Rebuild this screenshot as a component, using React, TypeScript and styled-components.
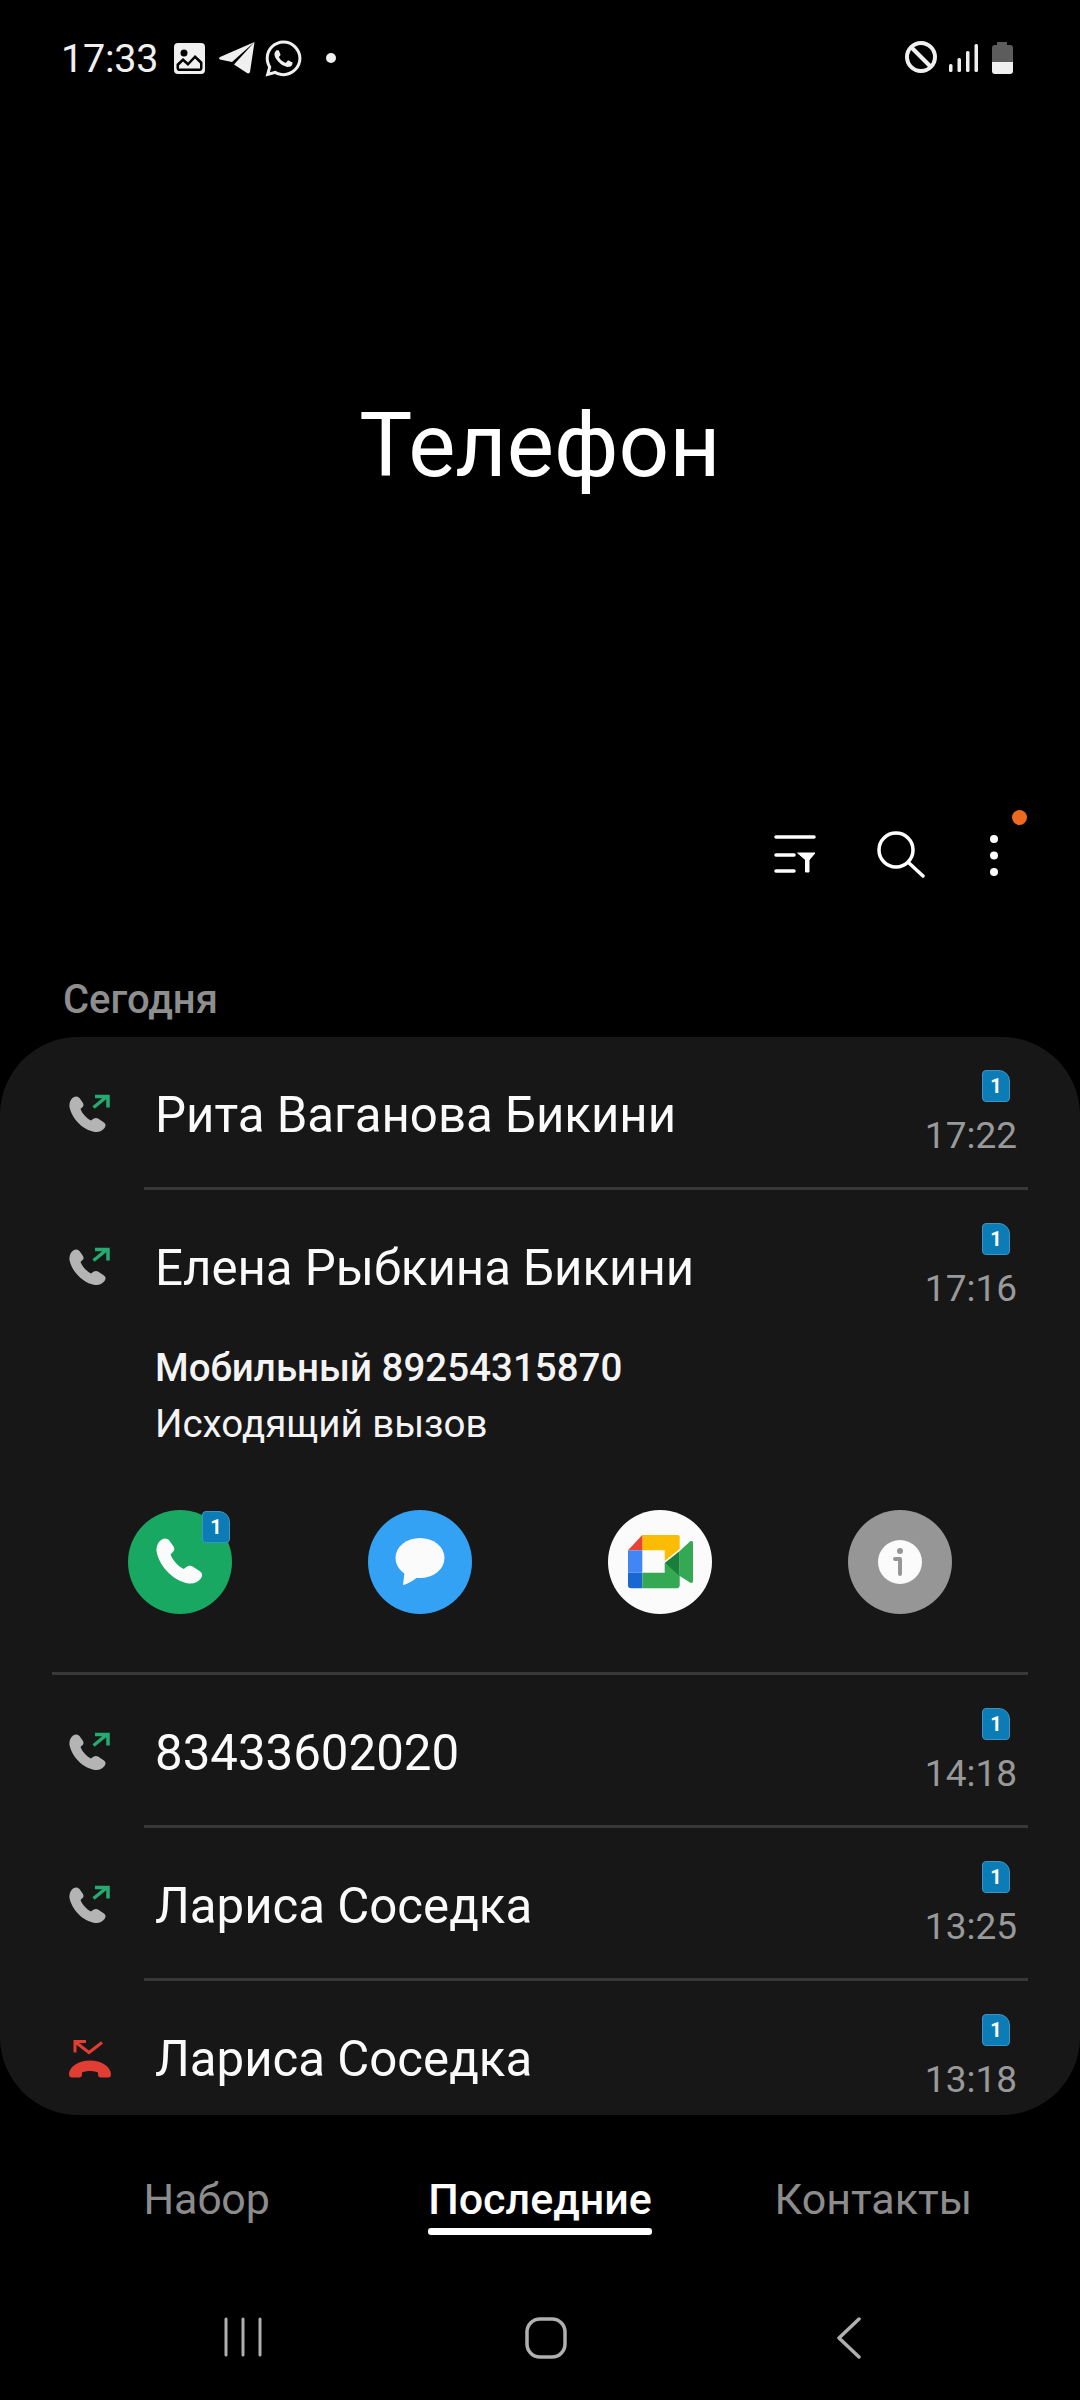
import styled, { createGlobalStyle } from "styled-components";
import { FaWhatsapp } from "react-icons/fa";

type CallKind = "outgoing" | "rejected";

interface Call {
  name: string;
  time: string;
  kind: CallKind;
}

const GlobalStyle = createGlobalStyle`
  html, body {
    margin: 0;
    padding: 0;
    background: #000;
  }
  * {
    box-sizing: border-box;
  }
`;

const Page = styled.div`
  width: 1080px;
  height: 2400px;
  background: #000;
  color: #fff;
  font-family: Roboto, "Noto Sans", sans-serif;
  display: flex;
  flex-direction: column;
  overflow: hidden;
`;

const StatusBar = styled.div`
  height: 116px;
  padding: 0 64px 0 61px;
  display: flex;
  align-items: center;
  justify-content: space-between;
  color: #f0f0f0;
`;

const StatusGroup = styled.div`
  display: flex;
  align-items: center;
`;

const Clock = styled.div`
  font-size: 39.5px;
  width: 113px;
  letter-spacing: -0.2px;
`;

const AppIcons = styled(StatusGroup)`
  gap: 14px;
`;

const WhatsappIcon = styled(FaWhatsapp)`
  margin-left: -6px;
`;

const StatusDot = styled.span`
  width: 10px;
  height: 10px;
  margin-left: 22px;
  border-radius: 50%;
  background: #f0f0f0;
`;

const TitleArea = styled.div`
  height: 658px;
  display: flex;
  align-items: center;
  justify-content: center;
`;

const Title = styled.h1`
  margin: 0;
  font-size: 89px;
  font-weight: 400;
`;

const Toolbar = styled.div`
  height: 162px;
  padding-right: 49px;
  display: flex;
  align-items: center;
  justify-content: flex-end;
`;

const ToolButton = styled.div<{ $width: number }>`
  position: relative;
  width: ${({ $width }) => $width}px;
  display: flex;
  justify-content: center;
  align-items: center;
`;

const NoticeDot = styled.span`
  position: absolute;
  top: -21px;
  left: 55px;
  width: 15px;
  height: 15px;
  border-radius: 50%;
  background: #ee6a1f;
`;

const SectionLabel = styled.div`
  height: 101px;
  padding: 39px 0 0 63px;
  font-size: 40px;
  line-height: 50px;
  font-weight: 500;
  color: #8e8e8e;
`;

const Card = styled.div`
  height: 1078px;
  background: #171717;
  border-radius: 78px;
  overflow: hidden;
`;

const Row = styled.div`
  height: 150px;
  padding-left: 69px;
  display: flex;
  align-items: center;
`;

const IconSlot = styled.div`
  width: 86px;
  height: 44px;
  margin-top: 3px;
  flex-shrink: 0;
`;

const Name = styled.div`
  flex: 1;
  font-size: 49.2px;
  margin-top: 5px;
  color: #fafafa;
`;

const RowMeta = styled.div`
  align-self: flex-start;
  padding: 33px 63px 0 0;
  display: flex;
  flex-direction: column;
  align-items: flex-end;
`;

const SimBadge = styled.div`
  width: 28px;
  height: 32px;
  border: 1px solid #3d94c4;
  border-radius: 4px 11px 4px 4px;
  background: #0b7cb6;
  color: #fff;
  font-size: 20px;
  line-height: 30px;
  font-weight: 700;
  text-align: center;
`;

const RowSim = styled(SimBadge)`
  margin-right: 7px;
`;

const Time = styled.div`
  margin-top: 11px;
  font-size: 37px;
  line-height: 46px;
  color: #999;
`;

const Divider = styled.div<{ $full?: boolean }>`
  height: 3px;
  margin: 0 52px 0 ${({ $full }) => ($full ? 52 : 144)}px;
  background: #383838;
`;

const Details = styled.div`
  padding-left: 155px;
  display: flex;
  flex-direction: column;
`;

const DetailLine = styled.div<{ $strong?: boolean }>`
  font-size: 38.5px;
  height: ${({ $strong }) => ($strong ? 55 : 54)}px;
  line-height: 52px;
  padding-top: ${({ $strong }) => ($strong ? 2 : 3)}px;
  font-weight: ${({ $strong }) => ($strong ? 500 : 400)};
  color: #f4f4f4;
`;

const Actions = styled.div`
  margin-top: 61px;
  padding: 0 0 58px 60px;
  display: grid;
  grid-template-columns: repeat(4, 240px);
  justify-items: center;
`;

const ActionCircle = styled.div<{ $bg: string }>`
  position: relative;
  width: 104px;
  height: 104px;
  border-radius: 50%;
  background: ${({ $bg }) => $bg};
  display: flex;
  align-items: center;
  justify-content: center;
`;

const ActionSim = styled(SimBadge)`
  position: absolute;
  top: 1px;
  right: 2px;
`;

const Tabs = styled.div`
  height: 126px;
  padding: 0 40px;
  display: grid;
  grid-template-columns: repeat(3, 1fr);
  justify-items: center;
  align-items: start;
`;

const Tab = styled.div<{ $active?: boolean }>`
  padding-top: 56px;
  font-size: 43px;
  line-height: 56px;
  font-weight: ${({ $active }) => ($active ? 500 : 400)};
  color: ${({ $active }) => ($active ? "#fff" : "#8c8c8c")};

  &::after {
    content: "";
    display: ${({ $active }) => ($active ? "block" : "none")};
    height: 7px;
    margin-top: 1px;
    border-radius: 3px;
    background: #fff;
  }
`;

const NavBar = styled.div`
  flex: 1;
  padding: 76px 0 0 91px;
  display: grid;
  grid-template-columns: repeat(3, 303px);
  justify-items: center;
  align-items: start;
`;

const Handset = () => (
  <path d="M5 1C7 0 9 .5 10.500 2L14 7C15 9 14.500 10.500 13 11.500L11.500 13C13 17 17 22 22 24.500L24 23C25.500 22 27.500 21.500 29 22.500L35 26.500C37 28 37 30 35.500 32C33 35 30 36.500 26 36C14 34 3 23 .5 11C0 7 1.500 3 5 1Z" />
);

const OutgoingIcon = () => (
  <svg width="42" height="44" viewBox="0 0 42 44">
    <g fill="#b4b4b4" transform="translate(0 4)">
      <Handset />
    </g>
    <path
      d="M24.500 15.500L38 4.500M26 4.500H39V15.500"
      fill="none"
      stroke="#25ab70"
      strokeWidth="3.500"
    />
  </svg>
);

const RejectedIcon = () => (
  <svg width="42" height="44" viewBox="0 0 42 44">
    <path
      d="M7 6.500L20 16.500L33 6.500M6 16.500V5.500H17"
      fill="none"
      stroke="#e23d33"
      strokeWidth="3"
    />
    <path
      fill="#e23d33"
      transform="translate(0 1.500)"
      d="M0 37C0 29 10 23 21 23C32 23 42 29 42 37C42 39 41 40 39 40H32C30 40 29 39 29 37V35C24 33 18 33 13 35V37C13 39 12 40 10 40H3C1 40 0 39 0 37Z"
    />
  </svg>
);

const GalleryIcon = () => (
  <svg width="31" height="31" viewBox="0 0 31 31">
    <rect width="31" height="31" rx="4" fill="#f0f0f0" />
    <circle cx="10" cy="10" r="3.500" fill="#000" />
    <path
      d="M2.500 25V21L9 15L14 19.500L21 12L28.500 19V25C28.500 26.500 27.500 28 26 28H5C3.500 28 2.500 26.500 2.500 25Z"
      fill="#000"
    />
    <path d="M5 25.500V22.500L9 18.500L14 23L21 15.500L26 20.500V25.500Z" fill="#f0f0f0" />
  </svg>
);

const TelegramIcon = () => (
  <svg width="36" height="32" viewBox="0 0 36 32" fill="#f0f0f0">
    <path d="M35.500 0L1 15C-.5 16 0 17 1 17.500L13 20Z" />
    <path d="M35.500 0L15 22.500L28 31C29.500 32 30.500 31 31 30Z" />
  </svg>
);

const StatusRight = () => (
  <svg width="111" height="34" viewBox="0 0 111 34">
    <circle cx="16" cy="16" r="14" fill="none" stroke="#f0f0f0" strokeWidth="4" />
    <path d="M6 6L26 26" stroke="#f0f0f0" strokeWidth="4" />
    <g fill="#f0f0f0">
      <rect x="44" y="23" width="3.500" height="8" rx="1.500" />
      <rect x="52.500" y="17" width="3.500" height="14" rx="1.500" />
      <rect x="61" y="10" width="3.500" height="21" rx="1.500" />
      <rect x="69.500" y="3" width="3.500" height="28" rx="1.500" />
    </g>
    <path
      d="M92 1H102V4H105C107 4 108 5 108 7V21H87V7C87 5 88 4 90 4H92Z"
      fill="#5c5c5c"
    />
    <path d="M87 21H108V30C108 32 107 33 105 33H90C88 33 87 32 87 30Z" fill="#f0f0f0" />
  </svg>
);

const FilterIcon = () => (
  <svg width="42" height="40" viewBox="0 0 42 40" fill="none" stroke="#fff" strokeWidth="3.500" strokeLinecap="round">
    <path d="M2 2H40M2 20H20M2 36H20" />
    <path d="M24 18H41L35 25V37H31.500V25Z" fill="#fff" strokeWidth="1" strokeLinejoin="round" />
  </svg>
);

const SearchIcon = () => (
  <svg width="48" height="48" viewBox="0 0 48 48" fill="none" stroke="#fff" strokeWidth="3.500" strokeLinecap="round">
    <circle cx="19" cy="19" r="17" />
    <path d="M32 32L46 45" />
  </svg>
);

const MoreIcon = () => (
  <svg width="16" height="48" viewBox="0 0 16 48" fill="#fff">
    <circle cx="8" cy="8" r="4" />
    <circle cx="8" cy="24.500" r="4" />
    <circle cx="8" cy="41" r="4" />
  </svg>
);

const MessageIcon = () => (
  <svg width="50" height="48" viewBox="0 0 50 48">
    <ellipse cx="25" cy="20" rx="24.500" ry="20" fill="#fbfbfb" />
    <path d="M10 30L8 47C14 46 20 41 24 38Z" fill="#fbfbfb" />
  </svg>
);

const MeetIcon = () => (
  <svg width="65" height="54" viewBox="0 0 65 54">
    <path d="M14.300 0H50C51 0 51.700 1 51.700 2V14L36.700 26V15.300H14.300Z" fill="#fbbc04" />
    <path d="M0 15.300L14.300 0V15.300Z" fill="#ea4335" />
    <rect y="15.300" width="14.300" height="22.400" fill="#4285f4" />
    <path d="M0 37.700H14.300V53.300H3C1 53.300 0 52 0 50.500Z" fill="#1967d2" />
    <path d="M14.300 37.700H36.700V28L51.700 40V50.500C51.700 52 50.500 53.300 49 53.300H14.300Z" fill="#34a853" />
    <path d="M36.700 28L51.700 16V41Z" fill="#188038" />
    <path d="M51.700 16L62 6.500C63.500 5.500 65 6 65 8V46C65 48 63.500 48.500 62 47.500L51.700 41Z" fill="#34a853" />
  </svg>
);

const InfoIcon = () => (
  <svg width="44" height="44" viewBox="0 0 44 44">
    <circle cx="22" cy="22" r="22" fill="#fbfbfb" />
    <circle cx="22" cy="11" r="3" fill="#969696" />
    <path d="M17 19H22V34" fill="none" stroke="#969696" strokeWidth="4" strokeLinecap="round" strokeLinejoin="round" />
  </svg>
);

const NavRecents = () => (
  <svg width="38" height="40" viewBox="0 0 38 40" stroke="#b0b0b0" strokeWidth="3" strokeLinecap="round">
    <path d="M2 2V38M19 2V38M36 2V38" />
  </svg>
);

const NavHome = () => (
  <svg width="42" height="42" viewBox="0 0 42 42">
    <rect x="2" y="2" width="38" height="38" rx="13" fill="none" stroke="#b0b0b0" strokeWidth="3.500" />
  </svg>
);

const NavBack = () => (
  <svg width="26" height="42" viewBox="0 0 26 42">
    <path d="M23 2L3 21L23 40" fill="none" stroke="#b0b0b0" strokeWidth="3.500" strokeLinecap="round" strokeLinejoin="round" />
  </svg>
);

const CallRow = ({ call }: { call: Call }) => (
  <Row>
    <IconSlot>{call.kind === "outgoing" ? <OutgoingIcon /> : <RejectedIcon />}</IconSlot>
    <Name>{call.name}</Name>
    <RowMeta>
      <RowSim>1</RowSim>
      <Time>{call.time}</Time>
    </RowMeta>
  </Row>
);

const laterCalls: Call[] = [
  { name: "83433602020", time: "14:18", kind: "outgoing" },
  { name: "Лариса Соседка", time: "13:25", kind: "outgoing" },
  { name: "Лариса Соседка", time: "13:18", kind: "rejected" },
];

const App = () => (
  <Page>
    <GlobalStyle />
    <StatusBar>
      <StatusGroup>
        <Clock>17:33</Clock>
        <AppIcons>
          <GalleryIcon />
          <TelegramIcon />
          <WhatsappIcon size={41} />
        </AppIcons>
        <StatusDot />
      </StatusGroup>
      <StatusRight />
    </StatusBar>

    <TitleArea>
      <Title>Телефон</Title>
    </TitleArea>

    <Toolbar>
      <ToolButton $width={100}>
        <FilterIcon />
      </ToolButton>
      <ToolButton $width={112}>
        <SearchIcon />
      </ToolButton>
      <ToolButton $width={74}>
        <MoreIcon />
        <NoticeDot />
      </ToolButton>
    </Toolbar>

    <SectionLabel>Сегодня</SectionLabel>

    <Card>
      <CallRow call={{ name: "Рита Ваганова Бикини", time: "17:22", kind: "outgoing" }} />
      <Divider />
      <CallRow call={{ name: "Елена Рыбкина Бикини", time: "17:16", kind: "outgoing" }} />
      <Details>
        <DetailLine $strong>Мобильный 89254315870</DetailLine>
        <DetailLine>Исходящий вызов</DetailLine>
      </Details>
      <Actions>
        <ActionCircle $bg="#19a862">
          <svg width="48" height="48" viewBox="0 0 38 38" fill="#fbfbfb">
            <Handset />
          </svg>
          <ActionSim>1</ActionSim>
        </ActionCircle>
        <ActionCircle $bg="#33a2f4">
          <MessageIcon />
        </ActionCircle>
        <ActionCircle $bg="#fbfbfb">
          <MeetIcon />
        </ActionCircle>
        <ActionCircle $bg="#969696">
          <InfoIcon />
        </ActionCircle>
      </Actions>
      <Divider $full />
      {laterCalls.map((call, i) => (
        <div key={i}>
          {i > 0 && <Divider />}
          <CallRow call={call} />
        </div>
      ))}
    </Card>

    <Tabs>
      <Tab>Набор</Tab>
      <Tab $active>Последние</Tab>
      <Tab>Контакты</Tab>
    </Tabs>

    <NavBar>
      <NavRecents />
      <NavHome />
      <NavBack />
    </NavBar>
  </Page>
);

export default App;
